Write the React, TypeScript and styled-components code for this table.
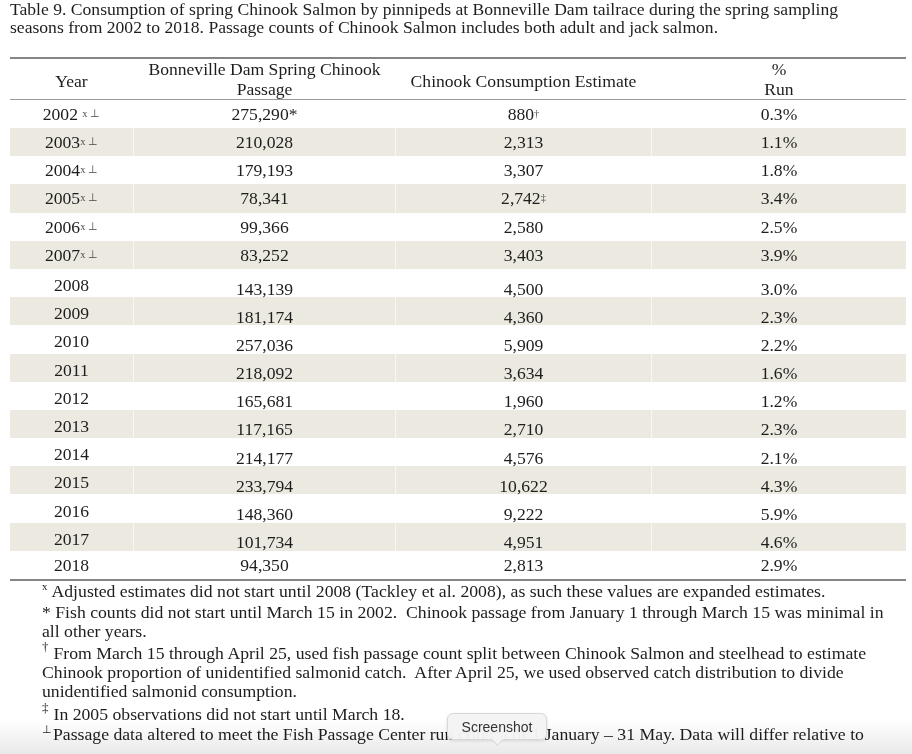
import React from 'react';
import styled, { createGlobalStyle } from 'styled-components';

const GlobalStyle = createGlobalStyle`
  html, body { margin: 0; padding: 0; background: #ffffff; }
  body { font-family: "Liberation Serif", "Times New Roman", serif; color: #1d1d1d; }
  *, *::before, *::after { box-sizing: border-box; }
`;

const Page = styled.div`
  position: relative;
  width: 912px;
  height: 754px;
  overflow: hidden;
  padding: 1px 6px 0 10px;
`;

const Caption = styled.div`
  font-size: 17.6px;
  line-height: 17.5px;
`;

const Line = styled.div`
  white-space: pre;
`;

const Table = styled.div`
  width: 896px;
  margin-top: 21px;
  border-top: 2px solid #858585;
  border-bottom: 2px solid #858585;
`;

const Row = styled.div<{ $shade?: boolean; $h: number; $head?: boolean }>`
  display: grid;
  grid-template-columns: 123px 262px 256px 255px;
  height: ${(p) => p.$h}px;
  background: ${(p) => (p.$shade ? '#eceae0' : 'transparent')};
  border-bottom: ${(p) => (p.$head ? '1px solid #9a9a9a' : 'none')};
  font-size: 17.6px;
`;

const Cell = styled.div<{ $offset?: number; $lh?: number }>`
  display: flex;
  align-items: center;
  justify-content: center;
  text-align: center;
  white-space: pre;
  padding-top: ${(p) => p.$offset ?? 0}px;
  line-height: ${(p) => p.$lh ?? 16}px;
  & + & {
    border-left: 1px solid rgba(255, 255, 255, 0.6);
  }
`;

const Sup = styled.sup`
  font-size: 10.5px;
  line-height: 0;
  color: #4a4a4a;
  vertical-align: 6px;
`;

const Notes = styled.div`
  margin-left: 32px;
  font-size: 17.7px;
  line-height: 19px;
`;

const Note = styled.div<{ $gap: number }>`
  margin-top: ${(p) => p.$gap}px;
  white-space: pre;
`;

const Mark = styled.sup<{ $size: number; $space?: number }>`
  font-size: ${(p) => p.$size}px;
  line-height: 0;
  vertical-align: ${(p) => Math.round(p.$size * 0.6)}px;
  margin-right: ${(p) => p.$space ?? 0}px;
`;

const Fade = styled.div`
  position: absolute;
  left: 0;
  right: 0;
  bottom: 0;
  height: 34px;
  background: linear-gradient(to bottom, #ffffff, #e9e9e9);
  mix-blend-mode: multiply;
  pointer-events: none;
`;

const Tooltip = styled.div`
  position: absolute;
  left: 447px;
  top: 713px;
  width: 100px;
  height: 27px;
  border-radius: 6px;
  background: rgba(244, 244, 244, 0.97);
  border: 1px solid #d8d8d8;
  box-shadow: 0 1px 3px rgba(0, 0, 0, 0.12);
  font-family: "Liberation Sans", Arial, sans-serif;
  font-size: 14px;
  color: #333333;
  display: flex;
  align-items: center;
  justify-content: center;
  &::after {
    content: '';
    position: absolute;
    left: 45px;
    bottom: -5px;
    width: 9px;
    height: 9px;
    background: rgba(244, 244, 244, 0.97);
    border-right: 1px solid #d8d8d8;
    border-bottom: 1px solid #d8d8d8;
    transform: rotate(45deg);
  }
`;

type Rec = {
  year: string;
  yearSup?: string;
  passage: string;
  cons: string;
  consSup?: string;
  run: string;
};

const data: Rec[] = [
  { year: '2002 ', yearSup: 'x ⊥', passage: '275,290*', cons: '880', consSup: '†', run: '0.3%' },
  { year: '2003', yearSup: 'x ⊥', passage: '210,028', cons: '2,313', run: '1.1%' },
  { year: '2004', yearSup: 'x ⊥', passage: '179,193', cons: '3,307', run: '1.8%' },
  { year: '2005', yearSup: 'x ⊥', passage: '78,341', cons: '2,742', consSup: '‡', run: '3.4%' },
  { year: '2006', yearSup: 'x ⊥', passage: '99,366', cons: '2,580', run: '2.5%' },
  { year: '2007', yearSup: 'x ⊥', passage: '83,252', cons: '3,403', run: '3.9%' },
  { year: '2008', passage: '143,139', cons: '4,500', run: '3.0%' },
  { year: '2009', passage: '181,174', cons: '4,360', run: '2.3%' },
  { year: '2010', passage: '257,036', cons: '5,909', run: '2.2%' },
  { year: '2011', passage: '218,092', cons: '3,634', run: '1.6%' },
  { year: '2012', passage: '165,681', cons: '1,960', run: '1.2%' },
  { year: '2013', passage: '117,165', cons: '2,710', run: '2.3%' },
  { year: '2014', passage: '214,177', cons: '4,576', run: '2.1%' },
  { year: '2015', passage: '233,794', cons: '10,622', run: '4.3%' },
  { year: '2016', passage: '148,360', cons: '9,222', run: '5.9%' },
  { year: '2017', passage: '101,734', cons: '4,951', run: '4.6%' },
  { year: '2018', passage: '94,350', cons: '2,813', run: '2.9%' },
];

export default function App() {
  return (
    <>
      <GlobalStyle />
      <Page>
        <Caption>
          <Line>Table 9. Consumption of spring Chinook Salmon by pinnipeds at Bonneville Dam tailrace during the spring sampling</Line>
          <Line>seasons from 2002 to 2018. Passage counts of Chinook Salmon includes both adult and jack salmon.</Line>
        </Caption>
        <Table>
          <Row $h={41} $head>
            <Cell $offset={4} $lh={20}>Year</Cell>
            <Cell $lh={20}>Bonneville Dam Spring Chinook{'\n'}Passage</Cell>
            <Cell $offset={4} $lh={20}>Chinook Consumption Estimate</Cell>
            <Cell $lh={20}>%{'\n'}Run</Cell>
          </Row>
          {data.map((r, i) => {
            const n = parseInt(r.year, 10);
            const mid = n >= 2008 && n <= 2017;
            return (
              <Row key={r.year} $h={i === 0 ? 28 : 28.19} $shade={n % 2 === 1}>
                <Cell $offset={mid ? 4 : 0}>
                  {r.year}
                  {r.yearSup && <Sup>{r.yearSup}</Sup>}
                </Cell>
                <Cell $offset={mid ? 11 : 0}>{r.passage}</Cell>
                <Cell $offset={mid ? 11 : 0}>
                  {r.cons}
                  {r.consSup && <Sup>{r.consSup}</Sup>}
                </Cell>
                <Cell $offset={mid ? 11 : 0}>{r.run}</Cell>
              </Row>
            );
          })}
        </Table>
        <Notes>
          <Note $gap={1}>
            <Mark $size={11} $space={4}>x</Mark>Adjusted estimates did not start until 2008 (Tackley et al. 2008), as such these values are expanded estimates.
          </Note>
          <Note $gap={2}>
            <Line>* Fish counts did not start until March 15 in 2002.  Chinook passage from January 1 through March 15 was minimal in</Line>
            <Line>all other years.</Line>
          </Note>
          <Note $gap={3}>
            <Line><Mark $size={13} $space={5}>†</Mark>From March 15 through April 25, used fish passage count split between Chinook Salmon and steelhead to estimate</Line>
            <Line>Chinook proportion of unidentified salmonid catch.  After April 25, we used observed catch distribution to divide</Line>
            <Line>unidentified salmonid consumption.</Line>
          </Note>
          <Note $gap={4}>
            <Mark $size={13} $space={5}>‡</Mark>In 2005 observations did not start until March 18.
          </Note>
          <Note $gap={1}>
            <Mark $size={11} $space={1}>⊥</Mark>Passage data altered to meet the Fish Passage Center run criteria of 1 January – 31 May. Data will differ relative to
          </Note>
        </Notes>
        <Fade />
        <Tooltip>Screenshot</Tooltip>
      </Page>
    </>
  );
}
